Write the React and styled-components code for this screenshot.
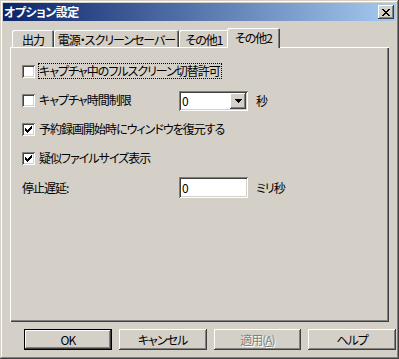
import React from 'react'
import styled, { createGlobalStyle, css } from 'styled-components'

const face = '#d4d0c8'
const shadow = '#808080'
const dark = '#404040'

const GlobalStyle = createGlobalStyle`
  html, body {
    margin: 0;
    padding: 0;
    background: ${face};
  }
  body {
    font-family: "Noto Sans CJK JP", "Noto Sans", sans-serif;
    font-size: 12px;
    letter-spacing: -1px;
    font-feature-settings: "palt";
    color: #000;
  }
`

const raised = css`
  box-shadow: inset -1px -1px ${dark}, inset 1px 1px #fff,
    inset -2px -2px ${shadow}, inset 2px 2px ${face};
`

const sunken = css`
  box-shadow: inset 1px 1px ${shadow}, inset -1px -1px #fff,
    inset 2px 2px ${dark}, inset -2px -2px ${face};
`

const Window = styled.div`
  width: 399px;
  height: 359px;
  box-sizing: border-box;
  padding: 3px;
  background: ${face};
  box-shadow: inset -1px -1px ${dark}, inset 1px 1px ${face},
    inset -2px -2px ${shadow}, inset 2px 2px #fff;
  display: flex;
  flex-direction: column;
`

const TitleBar = styled.div`
  height: 18px;
  display: flex;
  align-items: center;
  justify-content: space-between;
  padding: 0 2px 0 1px;
  background: linear-gradient(to right, #0a246a, #a6caf0);
`

const Title = styled.span`
  color: #fff;
  font-weight: bold;
  font-size: 12px;
  letter-spacing: -0.5px;
  line-height: 14px;
`

const CloseButton = styled.div`
  width: 16px;
  height: 14px;
  background: ${face};
  ${raised};
  display: flex;
  align-items: center;
  justify-content: center;
  svg { display: block; margin: 0 0 0 -1px; }
`

const Body = styled.div`
  padding: 7px 0 0 7px;
  display: flex;
  flex-direction: column;
`

const TabStrip = styled.div`
  height: 19px;
  display: flex;
  align-items: flex-end;
  padding-left: 2px;
  position: relative;
  z-index: 1;
`

const Tab = styled.div`
  box-sizing: border-box;
  width: ${p => p.$w}px;
  height: 17px;
  background: ${face};
  border-radius: 2px 2px 0 0;
  box-shadow: inset 1px 1px #fff, inset -1px 0 ${dark}, inset -2px 0 ${shadow};
  display: flex;
  align-items: center;
  justify-content: center;
  white-space: nowrap;
  line-height: 13px;
  padding-top: 1px;
  ${p => p.$active && css`
    height: 20px;
    margin: 0 -2px -1px;
    padding-top: 0;
    padding-bottom: 2px;
    position: relative;
    z-index: 2;
  `}
`

const Panel = styled.div`
  box-sizing: border-box;
  width: 379px;
  height: 275px;
  background: ${face};
  box-shadow: inset 1px 1px #fff, inset -1px -1px ${dark}, inset -2px -2px ${shadow};
`

const Options = styled.div`
  display: grid;
  grid-template-columns: 157px 69px auto;
  grid-auto-rows: 29px;
  align-items: center;
  padding: 10px 0 0 12px;
`

const Check = styled.label`
  display: flex;
  align-items: center;
  gap: 5px;
  grid-column: ${p => (p.$wide ? '1 / -1' : 'auto')};
  line-height: 14px;
`

const Box = styled.span`
  width: 13px;
  height: 13px;
  flex: none;
  background: #fff;
  ${sunken};
  display: flex;
  align-items: center;
  justify-content: center;
`

const LabelText = styled.span`
  padding: 1px 2px 1px 1px;
  margin-left: -2px;
  margin-top: -2px;
  outline: ${p => (p.$focus ? '1px dotted #000' : 'none')};
  outline-offset: -1px;
  white-space: nowrap;
`

const Caption = styled.span`
  line-height: 14px;
  white-space: nowrap;
`

const Field = styled.div`
  box-sizing: border-box;
  width: 69px;
  height: ${p => p.$h}px;
  background: #fff;
  ${sunken};
  display: flex;
  align-items: center;
  justify-content: space-between;
  padding: 2px 2px 2px 3px;
  line-height: 14px;
`

const DropButton = styled.span`
  width: 16px;
  height: 16px;
  background: ${face};
  ${raised};
  display: flex;
  align-items: center;
  justify-content: center;
`

const Unit = styled.span`
  margin-left: 8px;
  line-height: 14px;
`

const ButtonRow = styled.div`
  display: flex;
  gap: 7px;
  padding: 7px 0 0 14px;
`

const Button = styled.div`
  box-sizing: border-box;
  width: 88px;
  height: 21px;
  background: ${face};
  ${raised};
  display: flex;
  align-items: center;
  justify-content: center;
  line-height: 14px;
  color: ${p => (p.$disabled ? shadow : '#000')};
  text-shadow: ${p => (p.$disabled ? '1px 1px #fff' : 'none')};
  ${p => p.$default && css`
    border: 1px solid #000;
    box-shadow: inset -1px -1px ${dark}, inset 1px 1px #fff,
      inset -2px -2px ${shadow};
  `}
`

const closeRows = [
  'XX....XX',
  '.XX..XX.',
  '..XXXX..',
  '...XX...',
  '..XXXX..',
  '.XX..XX.',
  'XX....XX',
]

const CloseGlyph = () => (
  <svg width="8" height="7" viewBox="0 0 8 7" shapeRendering="crispEdges">
    {closeRows.flatMap((row, y) =>
      row.split('').map((c, x) =>
        c === 'X' ? <rect key={`${x}-${y}`} x={x} y={y} width="1" height="1" fill="#000" /> : null
      )
    )}
  </svg>
)

const CheckMark = () => (
  <svg width="7" height="7" viewBox="0 0 7 7" shapeRendering="crispEdges">
    <path d="M0 2 L2 4 L7 -1 L7 2 L2 7 L0 5 Z" fill="#000" />
  </svg>
)

const Arrow = () => (
  <svg width="7" height="4" viewBox="0 0 7 4" shapeRendering="crispEdges">
    <path d="M0 0 H7 L3.5 4 Z" fill="#000" />
  </svg>
)

const CheckOption = ({ checked, focus, wide, children }) => (
  <Check $wide={wide}>
    <Box>{checked && <CheckMark />}</Box>
    <LabelText $focus={focus}>{children}</LabelText>
  </Check>
)

const tabs = [
  { label: '出力', w: 42 },
  { label: '電源・スクリーンセーバー', w: 125 },
  { label: 'その他1', w: 50 },
  { label: 'その他2', w: 53, active: true },
]

export default function App() {
  return (
    <>
      <GlobalStyle />
      <Window>
        <TitleBar>
          <Title>オプション設定</Title>
          <CloseButton><CloseGlyph /></CloseButton>
        </TitleBar>
        <Body>
          <TabStrip>
            {tabs.map(t => (
              <Tab key={t.label} $w={t.w} $active={t.active}>{t.label}</Tab>
            ))}
          </TabStrip>
          <Panel>
            <Options>
              <CheckOption wide focus>キャプチャ中のフルスクリーン切替許可</CheckOption>

              <CheckOption>キャプチャ時間制限</CheckOption>
              <Field $h={20}>
                <span>0</span>
                <DropButton><Arrow /></DropButton>
              </Field>
              <Unit>秒</Unit>

              <CheckOption wide checked>予約録画開始時にウィンドウを復元する</CheckOption>
              <CheckOption wide checked>疑似ファイルサイズ表示</CheckOption>

              <Caption>停止遅延:</Caption>
              <Field $h={21}>
                <span>0</span>
              </Field>
              <Unit>ミリ秒</Unit>
            </Options>
          </Panel>
          <ButtonRow>
            <Button $default>OK</Button>
            <Button>キャンセル</Button>
            <Button $disabled>適用(<u>A</u>)</Button>
            <Button>ヘルプ</Button>
          </ButtonRow>
        </Body>
      </Window>
    </>
  )
}
